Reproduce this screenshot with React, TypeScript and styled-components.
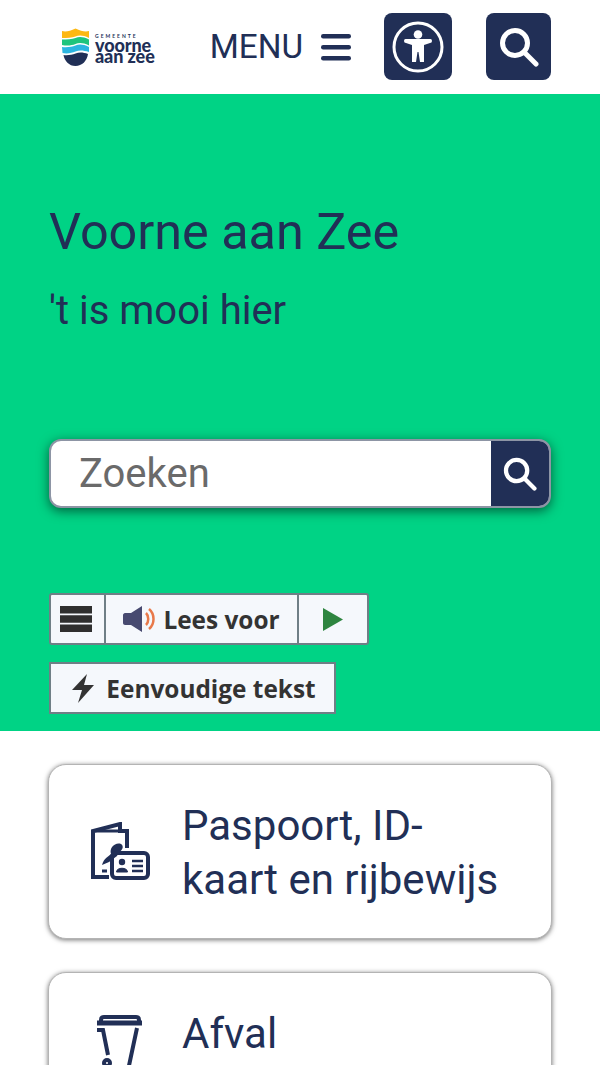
import { createGlobalStyle, styled } from "styled-components";

const navy = "#212f56";

const GlobalStyle = createGlobalStyle`
  html, body {
    margin: 0;
    height: 1065px;
    overflow: hidden;
    background: #fff;
    font-family: Roboto, sans-serif;
    color: ${navy};
  }
`;

const Header = styled.header`
  height: 94px;
  display: flex;
  align-items: center;
  padding: 0 49px 0 62px;
  box-sizing: border-box;
`;

const Logo = styled.div`
  display: flex;
  align-items: center;
  gap: 6px;
  width: 149px;
`;

const LogoText = styled.div`
  display: flex;
  flex-direction: column;
  font-family: Lato, sans-serif;
  font-weight: 900;
  font-size: 18px;
  line-height: 11.5px;
  letter-spacing: -0.1px;
`;

const LogoSmall = styled.span`
  font-size: 5px;
  line-height: 8px;
  letter-spacing: 2px;
  font-weight: 700;
`;

const MenuButton = styled.div`
  display: flex;
  align-items: center;
  gap: 18px;
  font-size: 33.3px;
  line-height: 40px;
  margin-right: 33px;
`;

const IconButton = styled.div<{ $w: number }>`
  width: ${(p) => p.$w}px;
  height: 67px;
  margin-top: -1px;
  background: ${navy};
  border-radius: 8px;
  display: flex;
  align-items: center;
  justify-content: center;
  flex-shrink: 0;
`;

const SearchTile = styled(IconButton)`
  margin-left: 34px;
`;

const Hero = styled.section`
  height: 637px;
  background: #00d385;
  padding: 106px 49px 0;
  box-sizing: border-box;
`;

const Title = styled.h1`
  margin: 0;
  font-size: 50.3px;
  line-height: 64px;
  font-weight: 400;
`;

const Subtitle = styled.p`
  margin: 25px 0 0;
  font-size: 40px;
  line-height: 44px;
`;

const SearchBar = styled.div`
  margin-top: 106px;
  height: 69px;
  display: flex;
  border: 2px solid #8d95a5;
  border-radius: 12px;
  box-sizing: border-box;
  overflow: hidden;
  background: #fff;
  box-shadow: 0 3px 12px rgba(0, 0, 0, 0.55);
`;

const SearchInput = styled.div`
  flex: 1;
  padding-left: 28px;
  font-size: 40px;
  line-height: 65px;
  color: #6a6a6a;
`;

const SearchSubmit = styled.div`
  width: 58px;
  background: ${navy};
  display: flex;
  align-items: center;
  justify-content: center;
`;

const ReadBar = styled.div`
  margin-top: 85px;
  display: flex;
  width: fit-content;
  height: 52px;
  border: 2px solid #6f7f86;
  border-radius: 3px;
  box-sizing: border-box;
  background: #f5f8fc;
`;

const ReadCell = styled.div<{ $w: number }>`
  width: ${(p) => p.$w}px;
  display: flex;
  align-items: center;
  justify-content: center;
  gap: 6px;
  box-sizing: border-box;
  font-family: "Open Sans", sans-serif;
  font-weight: 700;
  font-size: 24.4px;
  color: #333;
  & + & {
    border-left: 2px solid #6f7f86;
  }
`;

const BurgerCell = styled(ReadCell)`
  padding-right: 3px;
`;

const SimpleButton = styled.div`
  margin-top: 17px;
  width: 287px;
  height: 52px;
  display: flex;
  align-items: center;
  justify-content: center;
  gap: 11px;
  padding-left: 2px;
  border: 2px solid #6f7f86;
  box-sizing: border-box;
  background: #f5f8fc;
  font-family: "Open Sans", sans-serif;
  font-weight: 700;
  font-size: 24.4px;
  color: #333;
`;

const Cards = styled.main`
  padding: 33px 48px 0;
  display: flex;
  flex-direction: column;
  gap: 33px;
`;

const Card = styled.a`
  display: flex;
  align-items: flex-start;
  gap: 31px;
  min-height: 175px;
  padding: 34px 40px 0 42px;
  box-sizing: border-box;
  background: #fff;
  border-radius: 18px;
  border: 1px solid #b4b4b4;
  box-shadow: 0 1px 5px rgba(0, 0, 0, 0.55);
  font-size: 42px;
  line-height: 54px;
`;

const CardIcon = styled.div<{ $top: number }>`
  width: 60px;
  height: 60px;
  margin-top: ${(p) => p.$top}px;
  flex-shrink: 0;
`;

const Lens = ({ size }: { size: number }) => (
  <svg width={size} height={size} viewBox="0 0 40 40" fill="none" stroke="#fff" strokeWidth="5" strokeLinecap="round">
    <circle cx="16" cy="16" r="12.5" />
    <path d="M25 25L37 37" />
  </svg>
);

const Burger = () => (
  <svg width="30" height="27" viewBox="0 0 30 27" fill={navy}>
    <rect y="0" width="30" height="4.5" rx="2.2" />
    <rect y="11" width="30" height="4.5" rx="2.2" />
    <rect y="22" width="30" height="4.5" rx="2.2" />
  </svg>
);

export default function App() {
  return (
    <>
      <GlobalStyle />
      <Header>
        <Logo>
          <svg width="27" height="38" viewBox="0 0 27 38">
            <path d="M0 3C4 4 8 3 13.5 0.5C19 3 23 4 27 3V10C21 7 17 7 13.5 8.5C10 10 5 10 0 10Z" fill="#fdb813" />
            <path d="M0 11.5C5 11.5 10 11.5 13.5 10C17 8.5 21 8.5 27 11.5V17.5C21 14.5 17 14.5 13.5 16C10 17.5 5 18 0 17Z" fill="#1fc47d" />
            <path d="M0 19C5 19.5 10 19 13.5 17.5C17 16 21 16 27 19V24C21 22 17 22 13.5 23.5C10 25 5 26 0.5 25Z" fill="#2cb5e0" />
            <path d="M1.5 27C5 27.5 10 27 13.5 25.5C17 24 21 24 26 26C25 33 20 38 13.5 38C7 38 2.5 33 1.5 27Z" fill={navy} />
          </svg>
          <LogoText>
            <LogoSmall>GEMEENTE</LogoSmall>
            <span>voorne</span>
            <span>aan zee</span>
          </LogoText>
        </Logo>
        <MenuButton>
          MENU
          <Burger />
        </MenuButton>
        <IconButton $w={68}>
          <svg width="52" height="52" viewBox="0 0 52 52" fill="none">
            <circle cx="26" cy="26" r="24" stroke="#fff" strokeWidth="3" />
            <circle cx="26" cy="13.5" r="4.3" fill="#fff" />
            <path
              d="M13.5 18H38.5Q40 18 40 20Q40 22 38 22L32 24V41H28L26.5 31H25.5L24 41H20V24L14 22Q12 22 12 20Q12 18 13.5 18Z"
              fill="#fff"
            />
          </svg>
        </IconButton>
        <SearchTile $w={65}>
          <Lens size={40} />
        </SearchTile>
      </Header>
      <Hero>
        <Title>Voorne aan Zee</Title>
        <Subtitle>'t is mooi hier</Subtitle>
        <SearchBar>
          <SearchInput>Zoeken</SearchInput>
          <SearchSubmit>
            <Lens size={34} />
          </SearchSubmit>
        </SearchBar>
        <ReadBar>
          <BurgerCell $w={53}>
            <svg width="32" height="26" viewBox="0 0 32 26" fill="#2f2f2f">
              <rect width="32" height="7.5" />
              <rect y="9.25" width="32" height="7.5" />
              <rect y="18.5" width="32" height="7.5" />
            </svg>
          </BurgerCell>
          <ReadCell $w={193}>
            <svg width="34" height="26" viewBox="0 0 34 26" fill="none">
              <path d="M0 9C0 8 1 7 2 7H8L19 0V26L8 19H2C1 19 0 18 0 17Z" fill="#474a70" />
              <path d="M23 7C26 10 26 16 23 19" stroke="#e8794a" strokeWidth="2.5" />
              <path d="M26 3C32 8 32 18 26 23" stroke="#e8794a" strokeWidth="2.5" />
            </svg>
            Lees voor
          </ReadCell>
          <ReadCell $w={70}>
            <svg width="20" height="23" viewBox="0 0 20 23" fill="#2e8540">
              <path d="M0 0L20 11.5L0 23Z" />
            </svg>
          </ReadCell>
        </ReadBar>
        <SimpleButton>
          <svg width="24" height="29" viewBox="0 0 24 29" fill="#333">
            <path d="M16 0L1 16H11L7 29L23 11H13Z" />
          </svg>
          Eenvoudige tekst
        </SimpleButton>
      </Hero>
      <Cards>
        <Card>
          <CardIcon $top={23}>
            <svg width="60" height="60" viewBox="0 0 60 60" fill="none" stroke={navy} strokeWidth="4">
              <path d="M18 55H2V9L29 2V9H36V26" />
              <path d="M2 9H29" strokeWidth="3" />
              <path d="M11 43C13 36 17 35 20 32C18 26 24 20 30 22C33 24 32 28 28 30L26 34L18 40Z" fill={navy} stroke="none" />
              <rect x="21" y="31" width="36" height="25" rx="4" />
              <circle cx="31" cy="40" r="3.2" fill={navy} stroke="none" />
              <path d="M25.5 50C25.5 45 36.5 45 36.5 50Z" fill={navy} stroke={navy} strokeWidth="1" />
              <path d="M41 39H52M41 44H52M41 49H52" strokeWidth="2.5" />
              <path d="M11 49H16" strokeWidth="3" />
            </svg>
          </CardIcon>
          <span>Paspoort, ID-kaart en rijbewijs</span>
        </Card>
        <Card>
          <CardIcon $top={8}>
            <svg width="60" height="60" viewBox="0 0 60 60" fill="none" stroke={navy} strokeWidth="4">
              <path d="M10 7V5Q10 2 13 2H45Q48 2 48 5V7" />
              <path d="M6 8H51" strokeWidth="5" />
              <path d="M6 15H12L17 40M46 13L36 60" />
              <circle cx="16" cy="48" r="3" />
            </svg>
          </CardIcon>
          <span>Afval</span>
        </Card>
      </Cards>
    </>
  );
}
